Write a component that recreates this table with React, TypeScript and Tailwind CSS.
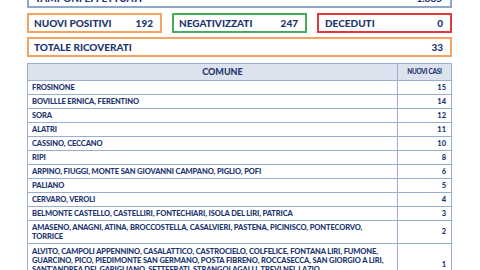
import React from "react";

const rows: { name: React.ReactNode; n: string; h: string }[] = [
  { name: "FROSINONE", n: "15", h: "h-[14px]" },
  { name: "BOVILLLE ERNICA, FERENTINO", n: "14", h: "h-[14px]" },
  { name: "SORA", n: "12", h: "h-[14px]" },
  { name: "ALATRI", n: "11", h: "h-[14px]" },
  { name: "CASSINO, CECCANO", n: "10", h: "h-[14px]" },
  { name: "RIPI", n: "8", h: "h-[14px]" },
  { name: "ARPINO, FIUGGI, MONTE SAN GIOVANNI CAMPANO, PIGLIO, POFI", n: "6", h: "h-[14px]" },
  { name: "PALIANO", n: "5", h: "h-[14px]" },
  { name: "CERVARO, VEROLI", n: "4", h: "h-[14px]" },
  { name: "BELMONTE CASTELLO, CASTELLIRI, FONTECHIARI, ISOLA DEL LIRI, PATRICA", n: "3", h: "h-[14px]" },
  {
    name: (
      <>
        AMASENO, ANAGNI, ATINA, BROCCOSTELLA, CASALVIERI, PASTENA, PICINISCO, PONTECORVO,
        <br />
        TORRICE
      </>
    ),
    n: "2",
    h: "h-[23px]",
  },
  {
    name: (
      <>
        ALVITO, CAMPOLI APPENNINO, CASALATTICO, CASTROCIELO, COLFELICE, FONTANA LIRI, FUMONE,
        <br />
        GUARCINO, PICO, PIEDIMONTE SAN GERMANO, POSTA FIBRENO, ROCCASECCA, SAN GIORGIO A LIRI,
        <br />
        SANT'ANDREA DEL GARIGLIANO, SETTEFRATI, STRANGOLAGALLI, TREVI NEL LAZIO,
        <br />
        VICALVI, VITICUSO
      </>
    ),
    n: "1",
    h: "h-[42px]",
  },
];

export default function App() {
  return (
    <div className="w-[480px] h-[270px] overflow-hidden bg-white font-['Lato',sans-serif] font-black text-[#1d3670]">
      <div className="ml-[27px] w-[425px] flex flex-col">
        <div className="-mt-[12px] h-[20px] border-2 border-[#8ea6c8] flex items-center justify-between pl-[6px] pr-[8px] text-[10px]">
          <span>TAMPONI EFFETTUATI</span>
          <span>1.885</span>
        </div>
        <div className="mt-[5px] grid grid-cols-3 gap-[10px] text-[10px]">
          <div className="h-[20px] border-2 border-[#f4a460] flex items-center justify-between pl-[5px] pr-[7px]">
            <span>NUOVI POSITIVI</span>
            <span>192</span>
          </div>
          <div className="h-[20px] border-2 border-[#45ad5c] flex items-center justify-between pl-[5px] pr-[7px]">
            <span>NEGATIVIZZATI</span>
            <span>247</span>
          </div>
          <div className="h-[20px] border-2 border-[#e0383f] flex items-center justify-between pl-[6px] pr-[7px]">
            <span>DECEDUTI</span>
            <span>0</span>
          </div>
        </div>
        <div className="mt-[4px] h-[20px] border-2 border-[#f4a460] flex items-center justify-between pl-[5px] pr-[7px] text-[10px]">
          <span>TOTALE RICOVERATI</span>
          <span>33</span>
        </div>
        <div className="mt-[6px] border border-[#9aafd0] flex flex-col">
          <div className="h-[17px] flex bg-[#dce3ee] border-b border-[#9aafd0]">
            <div className="flex-1 flex items-center justify-center text-[9px] pl-[20px]">COMUNE</div>
            <div className="w-[54px] border-l border-[#9aafd0] flex items-center justify-center text-[6.5px] tracking-[-0.3px]">
              NUOVI CASI
            </div>
          </div>
          {rows.map((r, i) => (
            <div key={i} className={`${r.h} flex border-b border-[#9aafd0] shrink-0`}>
              <div className="flex-1 flex items-center pl-[4px] text-[7.5px] leading-[9px] tracking-[-0.1px]">
                <span>{r.name}</span>
              </div>
              <div className="w-[54px] border-l border-[#9aafd0] flex items-center justify-end pr-[5px] text-[7.5px]">
                {r.n}
              </div>
            </div>
          ))}
        </div>
      </div>
    </div>
  );
}
